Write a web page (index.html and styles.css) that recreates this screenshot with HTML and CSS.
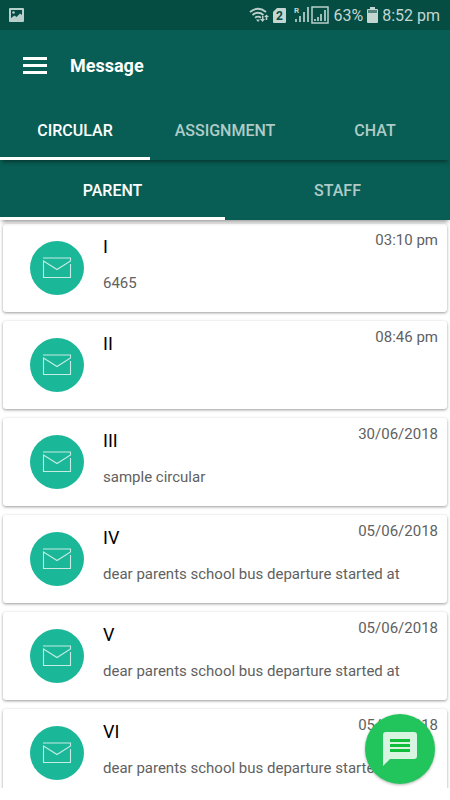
FILE: index.html
```html
<!DOCTYPE html>
<html lang="en">
<head>
<meta charset="UTF-8">
<meta name="viewport" content="width=device-width, initial-scale=1.0">
<link rel="stylesheet" href="styles.css">
<title>Message</title>
</head>
<body>
<svg class="sprite" aria-hidden="true">
    <symbol id="mail" viewBox="0 0 30 24">
        <path d="M1 2H28.5V5L15 13.5L1.5 5V21.5H28.5V8" fill="none" stroke="#c4ece3" stroke-width="1.1"/>
    </symbol>
</svg>
<div class="screen">
    <div class="status-bar">
        <svg class="picture" width="15" height="14" viewBox="0 0 15 14">
            <rect width="15" height="14" rx="1" fill="#b9cfcb"/>
            <path d="M2 2H13V7L11 5.5L7.5 9L5.5 7.5L2 10Z" fill="#054c42"/>
            <circle cx="4.500" cy="4.500" r="1.300" fill="#b9cfcb"/>
        </svg>
        <svg width="20" height="16" viewBox="0 0 20 16">
            <g fill="none" stroke="#b9cfcb" stroke-width="1.8">
                <path d="M1 5Q9 -1.5 17 5"/>
                <path d="M3.5 8Q9 3.5 14.5 8"/>
                <path d="M6 10.8Q9 8.5 12 10.8"/>
            </g>
            <path d="M7 12.5H11L9 15ZM11 12H13V9H14.5V12H16L13.5 15ZM15 10L17.5 7.5L20 10H18.3V13H16.7V10Z" fill="#b9cfcb"/>
        </svg>
        <svg width="13" height="15" viewBox="0 0 13 15">
            <path d="M4 0H12Q13 0 13 1V14Q13 15 12 15H1Q0 15 0 14V4Z" fill="#c3d6d2"/>
            <text x="3" y="12" class="sim">2</text>
        </svg>
        <svg class="signals" width="35" height="18" viewBox="0 0 35 18">
            <text x="0" y="7" class="roaming">R</text>
            <path d="M1 13H3V16H1ZM5 10H7V16H5ZM9 6H11V16H9ZM13 1H15V16H13Z" fill="#9dbdb7"/>
            <rect x="18" y="1" width="16" height="16" fill="none" stroke="#b9cfcb" stroke-width="1.5"/>
            <path d="M20 13H22V15H20ZM23 11H25V15H23ZM26 8H28V15H26ZM30 4H32V15H30Z" fill="#9dbdb7"/>
        </svg>
        <span>63%</span>
        <svg width="11" height="16" viewBox="0 0 11 16">
            <path d="M3 0H8V2H10Q11 2 11 3V15Q11 16 10 16H1Q0 16 0 15V3Q0 2 1 2H3Z" fill="#c3d6d2"/>
            <path d="M1 3H10V6H1Z" fill="#54867e"/>
        </svg>
        <span>8:52 pm</span>
    </div>
    <header class="toolbar">
        <button class="menu-btn" aria-label="Menu">
            <svg width="24" height="17" viewBox="0 0 24 17">
                <path d="M0 0H24V3H0ZM0 7H24V10H0ZM0 14H24V17H0Z" fill="#fff"/>
            </svg>
        </button>
        <h1>Message</h1>
    </header>
    <nav class="tabs main-tabs">
        <button class="tab active">CIRCULAR</button>
        <button class="tab">ASSIGNMENT</button>
        <button class="tab">CHAT</button>
    </nav>
    <nav class="tabs sub-tabs">
        <button class="tab active">PARENT</button>
        <button class="tab">STAFF</button>
    </nav>
    <main class="message-list">
        <article class="card">
            <div class="avatar"><svg><use href="#mail"/></svg></div>
            <div class="card-text">
                <h2>I</h2>
                <p>6465</p>
            </div>
            <time>03:10 pm</time>
        </article>
        <article class="card">
            <div class="avatar"><svg><use href="#mail"/></svg></div>
            <div class="card-text">
                <h2>II</h2>
            </div>
            <time>08:46 pm</time>
        </article>
        <article class="card">
            <div class="avatar"><svg><use href="#mail"/></svg></div>
            <div class="card-text">
                <h2>III</h2>
                <p>sample circular</p>
            </div>
            <time>30/06/2018</time>
        </article>
        <article class="card">
            <div class="avatar"><svg><use href="#mail"/></svg></div>
            <div class="card-text">
                <h2>IV</h2>
                <p>dear parents school bus departure started at</p>
            </div>
            <time>05/06/2018</time>
        </article>
        <article class="card">
            <div class="avatar"><svg><use href="#mail"/></svg></div>
            <div class="card-text">
                <h2>V</h2>
                <p>dear parents school bus departure started at</p>
            </div>
            <time>05/06/2018</time>
        </article>
        <article class="card">
            <div class="avatar"><svg><use href="#mail"/></svg></div>
            <div class="card-text">
                <h2>VI</h2>
                <p>dear parents school bus departure started at</p>
            </div>
            <time>05/06/2018</time>
        </article>
    </main>
    <button class="fab" aria-label="New message">
        <svg width="34" height="34" viewBox="0 0 34 34">
            <path d="M3 0H31Q34 0 34 3V24Q34 27 31 27H7L0 34V3Q0 0 3 0Z" fill="#d8f5e1"/>
            <path d="M7 7H27V10H7ZM7 12H27V15H7ZM7 17H27V20H7Z" fill="#10be3c"/>
        </svg>
    </button>
</div>
</body>
</html>
```
FILE: styles.css
```css
* {
    box-sizing: border-box;
}

body {
    margin: 0;
    background-color: #fff;
    font-family: Roboto, "Liberation Sans", sans-serif;
}

h1, h2, p {
    margin: 0;
}

button {
    border: none;
    padding: 0;
    background: none;
    font-family: inherit;
    cursor: pointer;
}

.sprite {
    position: absolute;
    width: 0;
    height: 0;
}

.screen {
    position: relative;
    display: flex;
    flex-direction: column;
    height: calc(100vh - 12px);
}

.status-bar {
    display: flex;
    align-items: center;
    gap: 4px;
    flex: none;
    height: 30px;
    padding: 0 10px 0 9px;
    background-color: #054c42;
    color: #c3d6d2;
    font-size: 16px;
}

.status-bar .picture {
    margin-right: auto;
}

.signals {
    margin-left: 4px;
}

.sim {
    font-size: 12px;
    font-weight: 700;
    fill: #054c42;
}

.roaming {
    font-size: 8px;
    font-weight: 700;
    fill: #c3d6d2;
}

.toolbar {
    display: flex;
    align-items: center;
    gap: 23px;
    flex: none;
    height: 71px;
    padding: 0 23px;
    background-color: #085e54;
}

.menu-btn svg {
    display: block;
}

.toolbar h1 {
    color: #fff;
    font-size: 18px;
    font-weight: 700;
}

.tabs {
    position: relative;
    display: flex;
    flex: none;
    height: 60px;
    background-color: #085e54;
    box-shadow: 0 4px 4px -2px rgba(0, 0, 0, 0.4);
}

.main-tabs {
    z-index: 2;
    height: 59px;
}

.sub-tabs {
    z-index: 1;
}

.tab {
    flex: 1;
    border-top: 3px solid transparent;
    border-bottom: 3px solid transparent;
    color: #b0cbc7;
    font-size: 16px;
    font-weight: 500;
}

.tab.active {
    border-bottom-color: #fff;
    color: #fff;
}

.message-list {
    display: flex;
    flex-direction: column;
    gap: 9px;
    flex: 1;
    min-height: 0;
    padding: 4px 3px 0;
    overflow: hidden;
}

.card {
    display: flex;
    flex: none;
    height: 88px;
    padding: 0 9px 0 27px;
    background-color: #fff;
    border-radius: 3px;
    box-shadow: 0 1px 3px rgba(0, 0, 0, 0.4);
}

.avatar {
    display: flex;
    align-items: center;
    justify-content: center;
    flex: none;
    align-self: center;
    width: 54px;
    height: 54px;
    margin-right: 19px;
    border-radius: 50%;
    background-color: #1bb799;
}

.avatar svg {
    width: 30px;
    height: 24px;
}

.card-text {
    flex: 1;
    width: 0;
    padding-top: 11px;
    white-space: nowrap;
}

.card h2 {
    color: #000;
    font-size: 18px;
    font-weight: 400;
    line-height: 24px;
}

.card p {
    margin-top: 14px;
    color: #616161;
    font-size: 15px;
    line-height: 20px;
}

.card time {
    padding-top: 6px;
    color: #616161;
    font-size: 15px;
    line-height: 20px;
}

.fab {
    position: absolute;
    right: 15px;
    bottom: 4px;
    z-index: 3;
    display: flex;
    align-items: center;
    justify-content: center;
    width: 70px;
    height: 70px;
    border-radius: 50%;
    background-color: #22c55b;
    box-shadow: 0 1px 3px rgba(0, 0, 0, 0.3);
}
```
